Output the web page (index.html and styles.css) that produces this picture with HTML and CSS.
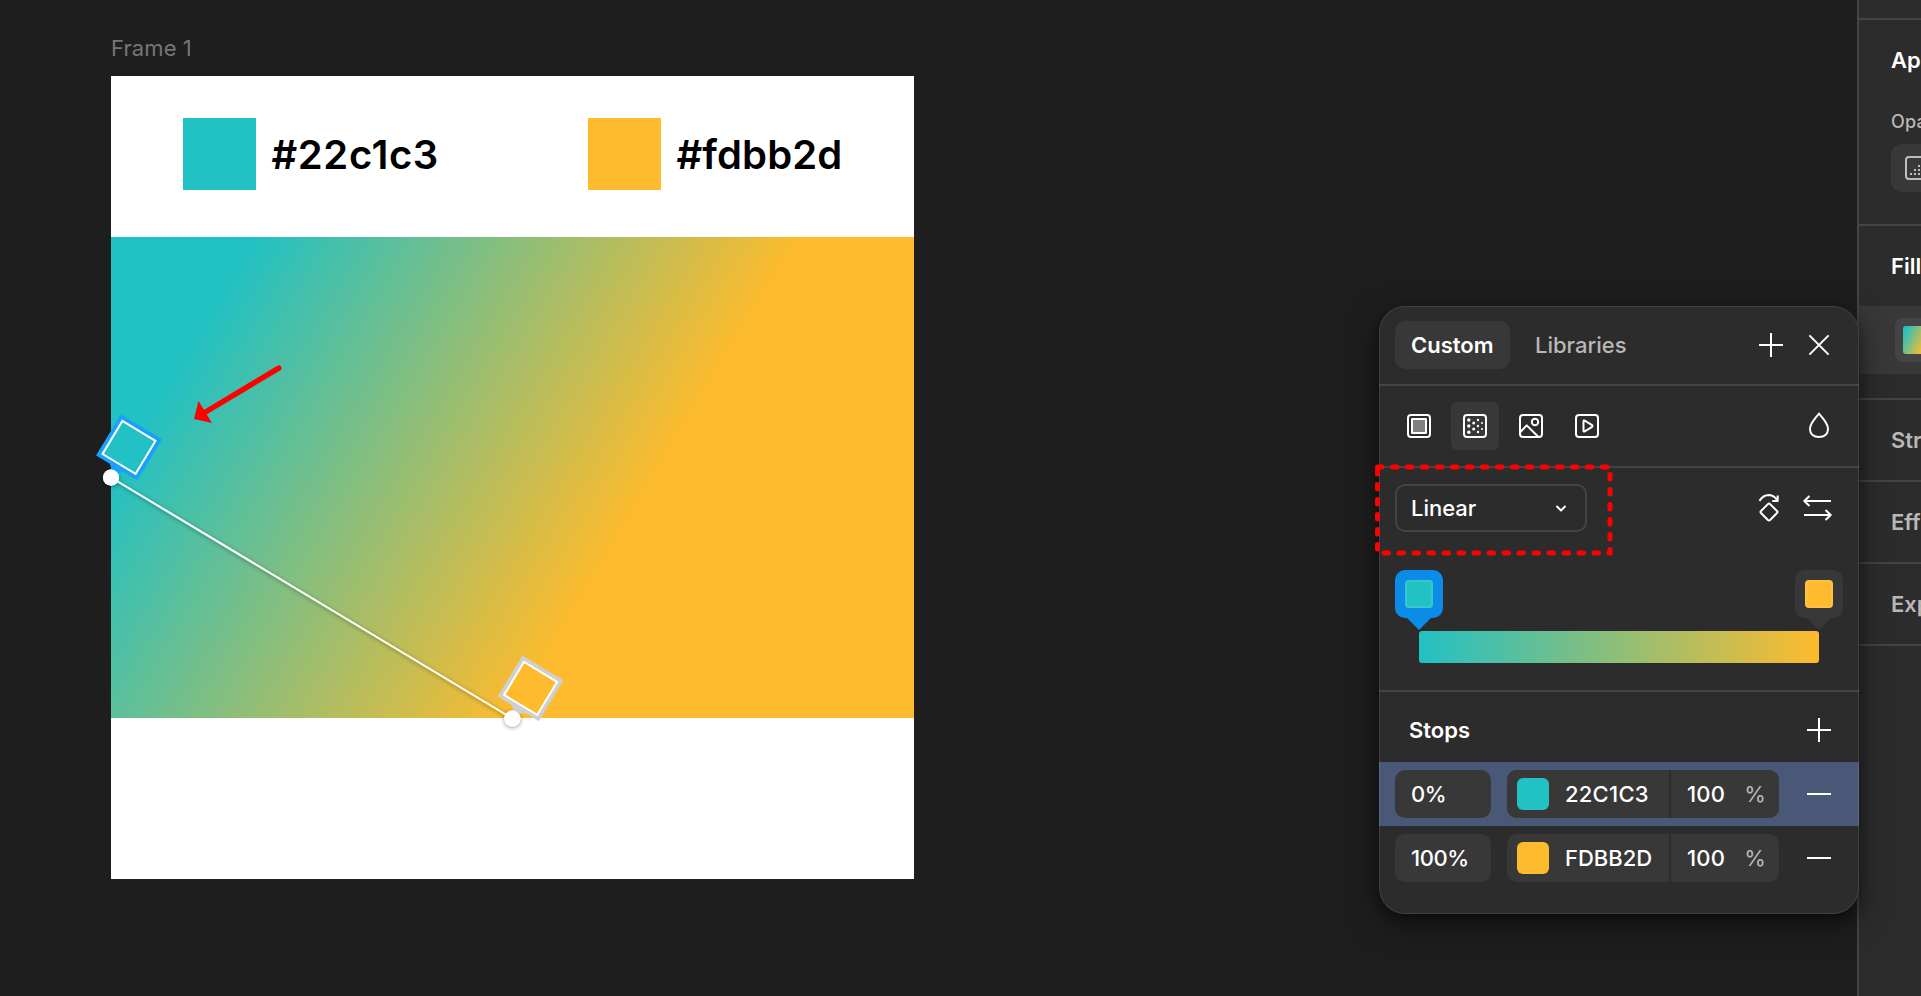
FILE: index.html
```html
<!DOCTYPE html>
<html lang="en">
<head>
<meta charset="utf-8">
<title>Gradient editor</title>
<link rel="stylesheet" href="styles.css">
</head>
<body>
<div class="app">
  <main class="canvas">
    <div class="frame-label">Frame 1</div>
    <div class="frame">
      <div class="palette">
        <div class="entry"><span class="swatch teal"></span><span class="code wide">#22c1c3</span></div>
        <div class="entry"><span class="swatch amber"></span><span class="code">#fdbb2d</span></div>
      </div>
      <div class="gradient"></div>
    </div>
  </main>
  <aside class="inspector">
    <section class="top"></section>
    <section class="appearance">
      <h2>Ap</h2>
      <div class="sub">Opa</div>
      <div class="opacity">
        <svg width="24" height="24" viewBox="0 0 24 24"><rect x="1" y="1" width="22" height="22" rx="3" fill="none" stroke="#bdbdbd" stroke-width="2"/><path d="M5 17h2v2H5zM9 17h2v2H9zM13 17h2v2h-2zM9 13h2v2H9zM13 13h2v2h-2zM13 9h2v2h-2z" fill="#bdbdbd"/></svg>
      </div>
    </section>
    <section class="fill">
      <h2>Fill</h2>
      <div class="fill-row"><div class="chip"><span class="mini"></span></div></div>
    </section>
    <section class="closed"><h2>Str</h2></section>
    <section class="closed"><h2>Eff</h2></section>
    <section class="closed"><h2>Exp</h2></section>
  </aside>
</div>

<svg class="overlay" width="1921" height="996" viewBox="0 0 1921 996">
  <defs>
    <filter id="soft" x="-20%" y="-20%" width="140%" height="140%"><feDropShadow dx="0" dy="1" stdDeviation="2" flood-color="#000" flood-opacity=".45"/></filter>
  </defs>
  <g filter="url(#soft)">
    <path d="M111 477.5L512.4 718.5" stroke="#fff" stroke-width="2"/>
    <circle cx="111" cy="477.5" r="8" fill="#fff"/>
    <circle cx="512.4" cy="718.6" r="8" fill="#fff"/>
  </g>
  <g transform="translate(129 447.4) rotate(31)">
    <path d="M-24 -24H24V24H8L0 31L-8 24H-24Z" fill="#18a0fb"/>
    <rect x="-19.3" y="-19.3" width="38.6" height="38.6" fill="#22c1c3" stroke="#fff" stroke-width="2"/>
  </g>
  <g transform="translate(530.6 688.4) rotate(31)">
    <path d="M-24 -24H24V24H8L0 31L-8 24H-24Z" fill="#cfcfcf"/>
    <rect x="-19.3" y="-19.3" width="38.6" height="38.6" fill="#fdbb2d" stroke="#fff" stroke-width="2"/>
  </g>
  <circle cx="111" cy="477.5" r="8" fill="#fff"/>
  <circle cx="512.4" cy="718.6" r="8" fill="#fff"/>
  <path d="M278.800 368.100L203 413.500" stroke="#f00" stroke-width="5.4" stroke-linecap="round"/>
  <path d="M194 419L198.5 401L212 423Z" fill="#f00"/>
</svg>

<div class="picker">
  <header class="tabs">
    <span class="tab active">Custom</span>
    <span class="tab">Libraries</span>
    <span class="spacer"></span>
    <span class="btn"><svg viewBox="0 0 48 48"><path d="M12 24H36M24 12V36"/></svg></span>
    <span class="btn"><svg viewBox="0 0 48 48"><path d="M14.4 14.4L33.6 33.6M33.6 14.4L14.4 33.6"/></svg></span>
  </header>
  <div class="types">
    <span class="btn"><svg viewBox="0 0 48 48"><rect x="13" y="13" width="22" height="22" rx="3"/><rect x="17" y="17" width="14" height="14" fill="#808080"/></svg></span>
    <span class="btn on"><svg viewBox="0 0 48 48"><rect x="13" y="13" width="22" height="22" rx="3"/><g class="dots"><circle cx="17.8" cy="18" r="1.7"/><circle cx="17.8" cy="24" r="1.7"/><circle cx="17.8" cy="30.2" r="1.7"/><circle cx="22.7" cy="21" r="1.5"/><circle cx="22.7" cy="27" r="1.5"/><circle cx="27" cy="18" r="1.2"/><circle cx="27" cy="24" r="1.2"/><circle cx="27" cy="30" r="1.2"/><circle cx="31" cy="21" r="1"/><circle cx="31" cy="27" r="1"/></g></svg></span>
    <span class="btn"><svg viewBox="0 0 48 48"><rect x="13" y="13" width="22" height="22" rx="3"/><circle cx="28" cy="20" r="3.2"/><path d="M13 30.5L19.7 23.4L31.5 35"/></svg></span>
    <span class="btn"><svg viewBox="0 0 48 48"><rect x="13" y="13" width="22" height="22" rx="3"/><path d="M20.5 19.3V28.7Q20.5 30 21.7 29.3L29.1 24.9Q30 24 29.1 23.1L21.7 18.7Q20.5 18 20.5 19.3Z"/></svg></span>
    <span class="spacer"></span>
    <span class="btn"><svg viewBox="0 0 48 48"><path d="M24 11.5C21.5 15.5 15 20.5 15 27C15 32 18.6 35 24 35C29.4 35 33 32 33 27C33 20.5 26.5 15.5 24 11.5Z"/></svg></span>
  </div>
  <div class="kind">
    <div class="select"><span>Linear</span><svg width="16" height="16" viewBox="0 0 16 16"><path d="M3.500 6L8 10.500L12.500 6"/></svg></div>
    <span class="spacer"></span>
    <span class="btn"><svg viewBox="0 0 48 48"><path d="M14.500 17Q18 11 24 11Q29.500 11.500 32.500 16.700M32.700 11.500V17H27.200"/><path d="M22.900 20.100Q24 19 25.100 20.100L32 27Q33 28 32 29L25.100 36Q24 37 22.900 36L16 29Q15 28 16 27Z"/></svg></span>
    <span class="btn"><svg viewBox="0 0 48 48"><path d="M38 17H11.500M16.500 12L11.300 17L16.500 22M11 31H37.500M32.500 26L37.700 31L32.500 36"/></svg></span>
  </div>
  <div class="ramp">
    <div class="pins">
      <span class="pin blue"><i class="teal"></i></span>
      <span class="pin"><i class="amber"></i></span>
    </div>
    <div class="bar"></div>
  </div>
  <div class="stops-head"><h3>Stops</h3><span class="btn"><svg viewBox="0 0 48 48"><path d="M12 24H36M24 12V36"/></svg></span></div>
  <div class="stop selected">
    <span class="pos">0%</span>
    <span class="color"><span class="hex spaced"><i class="teal"></i>22C1C3</span><span class="alpha"><span>100</span><span class="unit">%</span></span></span>
    <span class="btn"><svg viewBox="0 0 48 48"><path d="M12 24H36"/></svg></span>
  </div>
  <div class="stop">
    <span class="pos">100%</span>
    <span class="color"><span class="hex"><i class="amber"></i>FDBB2D</span><span class="alpha"><span>100</span><span class="unit">%</span></span></span>
    <span class="btn"><svg viewBox="0 0 48 48"><path d="M12 24H36"/></svg></span>
  </div>
</div>

<svg class="overlay callout" width="1921" height="996" viewBox="0 0 1921 996">
  <path d="M1377.5 467H1610V553H1377.5Z" fill="none" stroke="#f00" stroke-width="5" stroke-linecap="round" stroke-dasharray="4.5 10.5"/>
</svg>
</body>
</html>
```
FILE: styles.css
```css
* { box-sizing: border-box; }

body {
  margin: 0;
  width: 1921px;
  height: 996px;
  overflow: hidden;
  position: relative;
  background: #1e1e1e;
  color: #fff;
  font: 500 22px/32px Inter, "Liberation Sans", sans-serif;
}

h2, h3 { margin: 0; font-size: 22px; line-height: 32px; font-weight: 600; }

.teal { background: #22c1c3; }
.amber { background: #fdbb2d; }
.spacer { flex: 1; }

.app { display: flex; height: 996px; }

/* Canvas */
.canvas { flex: 1; padding: 32px 0 0 111px; }
.frame-label { height: 44px; color: #767676; font-weight: 400; letter-spacing: 0.1px; }
.frame { width: 803px; height: 803px; background: #fff; }
.palette { display: flex; height: 160.5px; padding: 41.5px 0 0 72px; }
.entry { display: flex; flex: none; gap: 16px; width: 405px; height: 72.5px; align-items: center; }
.entry:last-child { width: 300px; }
.swatch { width: 72.5px; height: 72.5px; }
.code { padding-top: 2px; color: #000; font-size: 40px; line-height: 48px; font-weight: 600; letter-spacing: 0.1px; }
.wide { letter-spacing: 0.6px; }
.gradient { height: 481.5px; background: linear-gradient(120.97deg, #22c1c3 124px, #fdbb2d 592.3px); }

/* Inspector */
.inspector { width: 64px; background: #2c2c2c; border-left: 2px solid #444; overflow: hidden; white-space: nowrap; }
.inspector section { border-bottom: 2px solid #444; }
.inspector h2 { padding-left: 32px; }
.top { height: 20px; }
.appearance { height: 206px; padding-top: 24px; }
.sub { padding: 34px 0 0 32px; height: 68px; font-size: 18px; line-height: 24px; color: #b8b8b8; letter-spacing: 0.2px; }
.opacity { margin-left: 32px; width: 120px; height: 48px; padding: 12px 14px; border-radius: 10px; background: #383838; }
.opacity svg { display: block; }
.fill { height: 174px; padding-top: 24px; }
.fill-row { height: 68px; margin-top: 24px; padding: 12px 0 0 36px; background: #383838; }
.chip { width: 120px; height: 44px; padding: 8px; border-radius: 8px; background: #444; }
.mini { display: block; width: 28px; height: 28px; border-radius: 3px; background: linear-gradient(115deg, #22c1c3 10%, #fdbb2d 75%); }
.closed { height: 82px; padding-top: 24px; color: #b8b8b8; }

/* Markers drawn over the canvas */
.overlay { position: absolute; left: 0; top: 0; pointer-events: none; fill: none; }

/* Picker */
.picker {
  position: absolute;
  left: 1379px;
  top: 306px;
  width: 480px;
  height: 608px;
  border-radius: 26px;
  background: #2c2c2c;
  box-shadow: 0 10px 32px rgba(0, 0, 0, .5), 0 4px 10px rgba(0, 0, 0, .3);
}
.picker::after {
  content: "";
  position: absolute;
  inset: 0;
  border: 1px solid rgba(255, 255, 255, .1);
  border-radius: 26px;
}
.btn { flex: none; width: 48px; height: 48px; border-radius: 6px; }
.btn svg { display: block; width: 48px; height: 48px; }
.picker svg { fill: none; stroke: #fff; stroke-width: 2; stroke-linejoin: round; }
.picker svg .dots { fill: #fff; stroke: none; }
.on { background: #383838; }

.tabs { display: flex; height: 80px; padding: 15px 16px 0; border-bottom: 2px solid #444; }
.tab { height: 48px; padding: 0 16px; line-height: 48px; border-radius: 10px; color: #b8b8b8; }
.tab.active { width: 115px; margin-right: 9px; background: #383838; color: #fff; font-weight: 600; }

.types { display: flex; gap: 8px; height: 82px; padding: 16px 16px 0; border-bottom: 2px solid #444; }

.kind { display: flex; height: 102px; padding: 16px 18px 0 16px; }
.select {
  display: flex;
  align-items: center;
  justify-content: space-between;
  width: 192px;
  height: 48px;
  padding: 0 16px 0 14px;
  border: 2px solid #444;
  border-radius: 10px;
}

.ramp { height: 122px; padding: 0 16px; border-bottom: 2px solid #444; }
.pins { display: flex; justify-content: space-between; height: 61px; }
.pin { position: relative; width: 48px; height: 48px; padding: 10px; border-radius: 10px; background: #383838; }
.pin::after {
  content: "";
  position: absolute;
  left: 12px;
  top: 48px;
  border: 12px solid transparent;
  border-top-color: #383838;
  border-bottom: 0;
}
.pin.blue { background: #0c8ce9; }
.pin.blue::after { border-top-color: #0c8ce9; }
.pin i { display: block; width: 28px; height: 28px; border-radius: 4px; box-shadow: inset 0 0 0 2px rgba(255, 255, 255, .1); }
.bar { height: 32px; margin: 0 24px; border-radius: 3px; background: linear-gradient(90deg, #22c1c3, #fdbb2d); }

.stops-head { display: flex; justify-content: space-between; align-items: center; height: 70px; padding: 6px 16px 0 30px; }

.stop { display: flex; align-items: center; height: 64px; padding: 0 16px; }
.selected { background: #4a5878; }
.pos { width: 96px; height: 48px; margin-right: 16px; padding-left: 16px; line-height: 48px; border-radius: 10px; background: #383838; letter-spacing: -0.4px; }
.color { display: flex; gap: 2px; width: 272px; height: 48px; margin-right: 16px; line-height: 48px; border-radius: 10px; overflow: hidden; background: #2c2c2c; }
.hex { display: flex; align-items: center; gap: 16px; width: 162px; padding-left: 10px; background: #383838; }
.spaced { letter-spacing: 0.25px; }
.hex i { width: 32px; height: 32px; border-radius: 6px; }
.alpha { display: flex; justify-content: space-between; width: 108px; padding: 0 13px 0 16px; background: #383838; letter-spacing: 0.2px; }
.unit { color: #b8b8b8; font-weight: 400; }
```
